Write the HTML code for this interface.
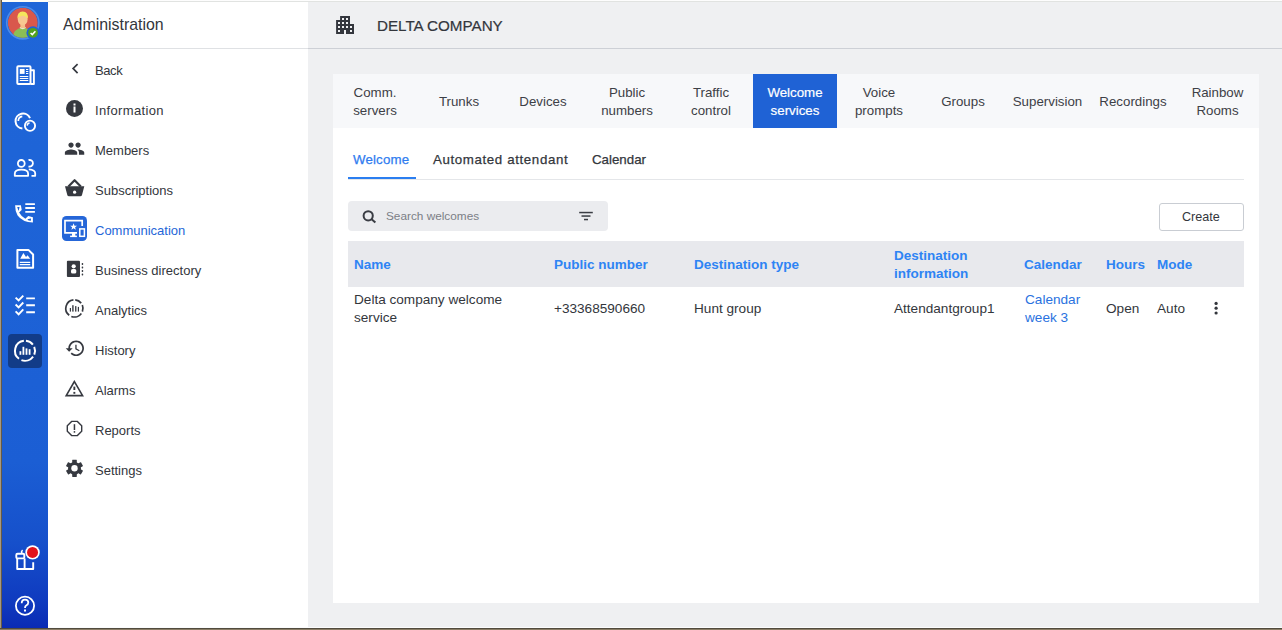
<!DOCTYPE html>
<html><head><meta charset="utf-8">
<style>
*{box-sizing:border-box;margin:0;padding:0}
html,body{width:1282px;height:630px;overflow:hidden;background:#fff}
body{position:relative;font-family:"Liberation Sans",sans-serif;color:#33363c}
.abs{position:absolute}
#topline{left:0;top:0;width:1282px;height:2px;background:linear-gradient(#fdfdfd 0 1px,#e1e3e1 1px 2px)}
#toprail{left:0;top:0;width:48px;height:2px;background:#fdfcf6}
#botwhite{left:48px;top:627px;width:1234px;height:1px;background:#fbfcfd}
#leftb{left:0;top:0;width:2px;height:630px;background:linear-gradient(90deg,#a59880 0 1px,#665a45 1px 2px)}
#botb{left:0;top:628px;width:1282px;height:2px;background:linear-gradient(#514b3e 0 1px,#8b7e66 1px 2px)}
#rail{left:2px;top:2px;width:46px;height:626px;background:linear-gradient(#1f66d8 0px,#1d62d6 300px,#1b5ed4 460px,#1650cb 540px,#0f3abf 600px,#0a2bb4 626px)}
#menu{left:48px;top:2px;width:260px;height:626px;background:#fff}
#menuhead{left:48px;top:48px;width:260px;height:1px;background:#dfe1e4}
#main{left:308px;top:2px;width:974px;height:626px;background:#eff0f2}
#mainhead{left:308px;top:48px;width:974px;height:1px;background:#cdd0d6}
.t{position:absolute;white-space:nowrap;line-height:1}
.mi{font-size:13px;color:#33363c}
#panel{left:333px;top:74px;width:926px;height:529px;background:#fff}
#tabbar{left:333px;top:74px;width:926px;height:54px;background:#f7f8fa;display:flex}
.tab{flex:none;width:84px;display:flex;align-items:center;justify-content:center;text-align:center;font-size:13.3px;line-height:18px;color:#3d4046;padding-top:1px}
.tab.act{background:#1f62d5;color:#fff;-webkit-text-stroke:0.2px #fff}
.st{font-size:13.3px;color:#33363c;-webkit-text-stroke:0.25px currentColor}
#subdiv{left:348px;top:179px;width:896px;height:1px;background:#e4e6e9}
#subul{left:348px;top:177px;width:68px;height:2px;background:#2b7ef0}
#search{left:348px;top:201px;width:260px;height:30px;background:#ebecef;border-radius:4px}
#create{left:1159px;top:203px;width:85px;height:28px;border:1px solid #c9cdd3;border-radius:3px;background:#fff}
#thead{left:348px;top:241px;width:896px;height:46px;background:#e8e9ed}
.th{font-size:13.5px;font-weight:700;color:#2e84f4;line-height:18px}
.td{font-size:13.6px;color:#33363c;line-height:18px}
#svg{position:absolute;left:0;top:0}
</style></head><body>
<div class="abs" id="topline"></div>
<div class="abs" id="toprail"></div>
<div class="abs" id="rail"></div>
<div class="abs" id="leftb"></div>
<div class="abs" id="botb"></div>
<div class="abs" id="menu"></div>
<div class="abs" id="menuhead"></div>
<div class="abs" id="main"></div>
<div class="abs" id="mainhead"></div>
<div class="abs" id="botwhite"></div>

<!-- menu -->
<div class="t" style="left:63px;top:17px;font-size:15.9px">Administration</div>
<div class="t mi" style="left:95px;top:64px;letter-spacing:-0.4px">Back</div>
<div class="t mi" style="left:95px;top:104px;letter-spacing:0.35px">Information</div>
<div class="t mi" style="left:95px;top:144px">Members</div>
<div class="t mi" style="left:95px;top:184px">Subscriptions</div>
<div class="t mi" style="left:95px;top:224px;color:#2566d8">Communication</div>
<div class="t mi" style="left:95px;top:264px">Business directory</div>
<div class="t mi" style="left:95px;top:304px">Analytics</div>
<div class="t mi" style="left:95px;top:344px">History</div>
<div class="t mi" style="left:95px;top:384px">Alarms</div>
<div class="t mi" style="left:95px;top:424px">Reports</div>
<div class="t mi" style="left:95px;top:464px">Settings</div>

<!-- header -->
<div class="t" style="left:377px;top:18px;font-size:15.2px;color:#33363c;-webkit-text-stroke:0.2px #33363c">DELTA COMPANY</div>

<div class="abs" id="panel"></div>
<div class="abs" id="tabbar">
  <div class="tab">Comm.<br>servers</div>
  <div class="tab">Trunks</div>
  <div class="tab">Devices</div>
  <div class="tab">Public<br>numbers</div>
  <div class="tab">Traffic<br>control</div>
  <div class="tab act">Welcome<br>services</div>
  <div class="tab">Voice<br>prompts</div>
  <div class="tab">Groups</div>
  <div class="tab" style="width:85px">Supervision</div>
  <div class="tab" style="width:86px">Recordings</div>
  <div class="tab" style="width:83px">Rainbow<br>Rooms</div>
</div>

<div class="t st" style="left:353px;top:153px;color:#2f7cf0;letter-spacing:0.15px">Welcome</div>
<div class="t st" style="left:433px;top:153px;letter-spacing:0.62px">Automated attendant</div>
<div class="t st" style="left:592px;top:153px">Calendar</div>
<div class="abs" id="subdiv"></div>
<div class="abs" id="subul"></div>

<div class="abs" id="search"></div>
<div class="t" style="left:386px;top:211px;font-size:11.8px;color:#7b7e86">Search welcomes</div>
<div class="abs" id="create"></div>
<div class="t" style="left:1182px;top:211px;font-size:12.6px;color:#33363c">Create</div>

<div class="abs" id="thead"></div>
<div class="t th" style="left:354px;top:256px">Name</div>
<div class="t th" style="left:554px;top:256px">Public number</div>
<div class="t th" style="left:694px;top:256px">Destination type</div>
<div class="t th" style="left:894px;top:247px">Destination<br>information</div>
<div class="t th" style="left:1024px;top:256px">Calendar</div>
<div class="t th" style="left:1106px;top:256px">Hours</div>
<div class="t th" style="left:1157px;top:256px">Mode</div>

<div class="t td" style="left:354px;top:291px">Delta company welcome<br>service</div>
<div class="t td" style="left:554px;top:300px">+33368590660</div>
<div class="t td" style="left:694px;top:300px">Hunt group</div>
<div class="t td" style="left:894px;top:300px">Attendantgroup1</div>
<div class="t td" style="left:1025px;top:291px;color:#2a72e0">Calendar<br>week 3</div>
<div class="t td" style="left:1106px;top:300px">Open</div>
<div class="t td" style="left:1157px;top:300px">Auto</div>

<svg id="svg" width="1282" height="630" viewBox="0 0 1282 630">
<!-- ===== rail icons ===== -->
<circle cx="22.8" cy="22.8" r="16.1" fill="none" stroke="#4c8be7" stroke-width="1.6"/>
<clipPath id="avc"><circle cx="22.8" cy="22.8" r="15"/></clipPath>
<g clip-path="url(#avc)">
 <circle cx="22.8" cy="22.8" r="15" fill="#d9584c"/>
 <path d="M12.6 40 Q12.6 28.6 22.7 27.6 Q32.6 28.6 33 40 Z" fill="#8bbf55"/>
 <path d="M19.6 28.1 Q22.7 30.2 25.9 28.1 L25.4 27 L20 27 Z" fill="#e6ead6"/>
 <rect x="20.4" y="22.5" width="4.7" height="5.6" fill="#f4c08a"/>
 <ellipse cx="22.7" cy="19.6" rx="4.9" ry="5.4" fill="#f7c891"/>
 <path d="M17.4 19.5 Q16.9 11.6 22.7 11.6 Q28.5 11.6 28 19.5 Q27.4 16.2 22.7 15.8 Q18 16.2 17.4 19.5 Z" fill="#f5e65c"/>
</g>
<circle cx="33" cy="32.8" r="6.6" fill="#1f63d6"/>
<circle cx="33" cy="32.8" r="4.9" fill="#52a11e"/>
<path d="M30.6 33 L32.3 34.6 L35.4 31.2" fill="none" stroke="#fff" stroke-width="1.6"/>

<g fill="none" stroke="#fff" stroke-width="2" stroke-linejoin="round">
 <!-- newspaper -->
 <rect x="17.3" y="66.2" width="13.2" height="17.8" rx="1"/>
 <path d="M30.5 70.3 H33.9 V84 H30.5" stroke-width="1.9"/>
 <rect x="19.8" y="68.9" width="4.8" height="5" fill="#fff" stroke="none"/>
 <path d="M26 69.5 H28.3 M26 71.5 H28.3 M26 73.5 H28.3 M19.8 76.5 H28.3 M19.8 78.5 H28.3 M19.8 80.5 H28.3" stroke-width="1"/>
 <!-- bubbles -->
 <path d="M22.4 128.5 A7.5 7.5 0 1 1 30 118.2" stroke-width="2"/>
 <circle cx="30" cy="125.75" r="5.1" stroke-width="1.9"/>
 <path d="M18.3 121 A4.7 4.7 0 0 1 22.3 116.3" stroke-width="1.7"/>
 <path d="M27.2 125.6 A2.8 2.8 0 0 1 29.6 123" stroke-width="1.5"/>
 <!-- contacts -->
 <circle cx="21.3" cy="163.4" r="3.4" stroke-width="1.8"/>
 <path d="M14.8 175.8 V173.5 Q14.8 169.6 21.4 169.6 Q28.1 169.6 28.1 173.5 V175.8 Z" stroke-width="1.8"/>
 <path d="M28.5 160.2 A3.3 3.3 0 1 1 28.5 166.4" stroke-width="1.8"/>
 <path d="M28.8 169.3 Q35.2 169.8 35.2 173.2 V175.8 H31.5" stroke-width="1.8"/>
 <!-- phone list -->
 <path d="M25.3 204.1 H34.9 M25.3 208 H34.9 M25.3 211.9 H34.9" stroke-width="1.8" stroke-linejoin="miter"/>
 <path d="M15.1 205.2 L20.9 205.2 L21.7 209.9 L19.1 212.4 Q21.4 216.5 25.4 218.8 L28.2 216.1 L32.9 217.3 L32.9 222.6 Q22.5 222.3 17.6 215.6 Q15.1 211.5 15.1 205.2 Z M17.2 207 L19.6 207 L18.6 210.9 Z M27.3 219.2 L31 218.5 L30.9 220.8 L28.6 220.6 Z" fill="#fff" fill-rule="evenodd" stroke="none"/>
 <!-- doc image -->
 <path d="M17.4 249.9 H28.4 L33.1 254.5 V267.7 H17.4 Z" stroke-width="2"/>
 <path d="M20.2 258.8 L23.4 252.9 L26 257 L27.6 255.2 L30.2 258.8 Z" fill="#fff" stroke="none"/>
 <path d="M19.8 262.4 H30.2 M19.8 264.6 H30.2" stroke-width="1.2"/>
 <!-- checklist -->
 <path d="M15.6 297.6 L18.6 300.5 L23.3 295.6 M15.6 304.5 L18.6 307.4 L23.3 302.5 M15.6 311.4 L18.6 314.3 L23.3 309.4" stroke-width="1.9" stroke-linejoin="miter"/>
 <path d="M26.2 298.4 H34.9 M26.2 305.3 H34.9 M26.2 312.3 H34.9" stroke-width="1.9"/>
</g>
<!-- analytics active -->
<rect x="8" y="334" width="34" height="34" rx="4" fill="#123c88"/>
<g fill="none" stroke="#fff" stroke-width="2">
 <path d="M25.96 340.85 A10 10 0 0 1 32.88 344.64 M34.21 346.89 A10 10 0 0 1 34.27 354.55 M33.09 356.68 A10 10 0 0 1 21.42 360.14 M18.98 358.79 A10 10 0 0 1 23.87 340.86"/>
</g>
<g fill="#fff">
 <rect x="19.5" y="351.2" width="1.8" height="3.6"/>
 <rect x="22.5" y="346.8" width="1.8" height="8"/>
 <rect x="25.6" y="348.4" width="1.8" height="6.4"/>
 <rect x="28.7" y="349.2" width="1.8" height="5.6"/>
</g>
<!-- gift -->
<g fill="none" stroke="#fff" stroke-width="1.9" stroke-linejoin="round">
 <path d="M17.2 558.4 V569 H33.2 V562.2"/>
 <path d="M24.6 558.4 V569"/>
 <rect x="16.3" y="553.8" width="8" height="4.6" rx="1.2"/>
 <path d="M21.8 553.4 Q20.9 551.6 22.6 550.2" stroke-width="1.6"/>
</g>
<circle cx="32.55" cy="552.4" r="7.2" fill="#fff"/>
<circle cx="32.55" cy="552.4" r="5.5" fill="#e3131b"/>
<!-- help -->
<circle cx="25" cy="605.8" r="9.1" fill="none" stroke="#fff" stroke-width="1.8"/>
<path d="M21.7 603.2 Q21.8 599.6 25 599.6 Q28.3 599.6 28.3 602.6 Q28.3 604.5 26.2 605.5 Q25 606.2 25 608" fill="none" stroke="#fff" stroke-width="1.8"/>
<rect x="24" y="609.5" width="2" height="2" fill="#fff"/>

<!-- ===== menu icons ===== -->
<g fill="#363940">
 <!-- chevron -->
 <path transform="translate(65.1 58.4) scale(0.85)" d="M15.41 7.41L14 6l-6 6 6 6 1.41-1.41L10.83 12z"/>
 <!-- info -->
 <circle cx="74.5" cy="108.4" r="8.5"/>
 <!-- people -->
 <path transform="translate(64,138) scale(0.88)" d="M16 11c1.66 0 2.99-1.34 2.99-3S17.66 5 16 5c-1.66 0-3 1.34-3 3s1.34 3 3 3zm-8 0c1.66 0 2.99-1.34 2.99-3S9.66 5 8 5C6.34 5 5 6.34 5 8s1.34 3 3 3zm0 2c-2.33 0-7 1.17-7 3.5V19h14v-2.5c0-2.330-4.67-3.5-7-3.5zm8 0c-.29 0-.62.02-.97.05 1.16.84 1.97 1.97 1.97 3.45V19h6v-2.5c0-2.33-4.67-3.5-7-3.5z"/>
 <!-- basket -->
 <path d="M65 186.3 H84.3 L82 195 Q81.7 196.3 80.3 196.3 H69 Q67.6 196.3 67.3 195 Z"/>
 <path d="M68.4 186.6 L74.6 180.2 L80.8 186.6" fill="none" stroke="#363940" stroke-width="2.2" stroke-linejoin="round"/>
 <!-- business directory -->
 <rect x="66.9" y="260.7" width="13.1" height="16.2" rx="1"/>
 <rect x="81.7" y="262.9" width="1.5" height="2" rx=".6"/>
 <rect x="81.7" y="266.4" width="1.5" height="2" rx=".6"/>
 <rect x="81.7" y="269.9" width="1.5" height="2" rx=".6"/>
 <rect x="81.7" y="273.4" width="1.5" height="2" rx=".6"/>
 <!-- analytics bars -->
 <rect x="69.8" y="308" width="1.2" height="3.6"/>
 <rect x="72.2" y="305.2" width="1.4" height="6.4"/>
 <rect x="75.1" y="306.1" width="1.3" height="5.5"/>
 <rect x="77.8" y="306.9" width="1.2" height="4.7"/>
 <!-- history -->
 <path transform="translate(64.85,337.85) scale(0.87)" d="M13 3c-4.97 0-9 4.03-9 9H1l3.890 3.890.07.14L9 12H6c0-3.87 3.13-7 7-7s7 3.13 7 7-3.13 7-7 7c-1.93 0-3.68-.79-4.94-2.06l-1.42 1.42C8.27 19.99 10.51 21 13 21c4.97 0 9-4.03 9-9s-4.03-9-9-9zm-1 5v5l4.28 2.54.72-1.21-3.5-2.08V8H12z"/>
 <!-- alarm dots -->
 <rect x="73.4" y="386.6" width="1.9" height="3.4"/>
 <rect x="73.4" y="391.9" width="1.9" height="1.9"/>
 <!-- reports ! -->
 <rect x="73.7" y="424.2" width="1.5" height="5.8"/>
 <rect x="73.7" y="431.1" width="1.5" height="1.6"/>
 <!-- gear -->
 <g transform="translate(74.5 468.3)">
  <circle r="6.4"/>
  <rect x="-2.3" y="-8.6" width="4.6" height="4.5" rx=".4"/>
  <rect x="-2.3" y="-8.6" width="4.6" height="4.5" rx=".4" transform="rotate(60)"/>
  <rect x="-2.3" y="-8.6" width="4.6" height="4.5" rx=".4" transform="rotate(120)"/>
  <rect x="-2.3" y="-8.6" width="4.6" height="4.5" rx=".4" transform="rotate(180)"/>
  <rect x="-2.3" y="-8.6" width="4.6" height="4.5" rx=".4" transform="rotate(240)"/>
  <rect x="-2.3" y="-8.6" width="4.6" height="4.5" rx=".4" transform="rotate(300)"/>
  <circle r="3.2" fill="#fff"/>
 </g>
</g>
<g fill="#fff">
 <rect x="73.5" y="106.5" width="2" height="6"/>
 <rect x="73.5" y="103.5" width="2" height="2"/>
 <circle cx="74.6" cy="192.2" r="1.6"/>
 <circle cx="73.7" cy="266.3" r="2.1"/>
 <rect x="71" y="269.1" width="5.3" height="4.5" rx="1.6"/>
</g>
<g fill="none" stroke="#363940">
 <path d="M75.22 299.84 A8.6 8.6 0 0 1 81.18 303.11 M82.32 305.04 A8.6 8.6 0 0 1 82.37 311.62 M81.36 313.45 A8.6 8.6 0 0 1 71.32 316.43 M69.22 315.27 A8.6 8.6 0 0 1 73.43 299.86" stroke-width="1.7"/>
 <path d="M74.4 381.5 L66.2 395.6 H82.6 Z" stroke-width="1.6" stroke-linejoin="miter"/>
 <path d="M71.6 421.4 H77.4 L81.7 425.7 V431.3 L77.4 435.6 H71.6 L67.3 431.3 V425.7 Z" stroke-width="1.4"/>
</g>
<!-- communication -->
<rect x="62" y="216" width="25" height="25" rx="4.5" fill="#2566d8"/>
<g fill="none" stroke="#fff" stroke-width="1.7">
 <path d="M82.2 225.9 V220.6 H65 V232.8 H77"/>
 <rect x="79.8" y="228.9" width="4.6" height="7.4" stroke-width="1.5"/>
</g>
<g fill="#fff">
 <rect x="72" y="233" width="3.3" height="3.2"/>
 <rect x="70.1" y="235.6" width="6.8" height="1.5"/>
 <path transform="translate(73.6 226.8) scale(1.15) translate(-73.6 -226.8)" d="M73.6 223.7 L74.4 225.8 L76.6 225.8 L74.9 227.1 L75.5 229.3 L73.6 228 L71.7 229.3 L72.3 227.1 L70.6 225.8 L72.8 225.8 Z"/>
</g>

<!-- ===== header building ===== -->
<g fill="#33363d">
 <path d="M340.1 16.1 H350 V24 H354 V33.9 H346 V30 H344 V33.9 H336.1 V20 H340.1 Z"/>
</g>
<g fill="#eff0f2">
 <rect x="342" y="18" width="2" height="2"/><rect x="346" y="18" width="2" height="2"/>
 <rect x="338" y="22" width="2" height="2"/><rect x="342" y="22" width="2" height="2"/><rect x="346" y="22" width="2" height="2"/>
 <rect x="338" y="26" width="2" height="2"/><rect x="342" y="26" width="2" height="2"/><rect x="346" y="26" width="2" height="2"/><rect x="350" y="26" width="2" height="2"/>
 <rect x="338" y="30" width="2" height="2"/><rect x="350" y="30" width="2" height="2"/>
</g>

<!-- search icon -->
<g fill="none" stroke="#3a3d44" stroke-width="2">
 <circle cx="368.2" cy="215.8" r="4.6"/>
 <path d="M371.6 219.2 L375.4 222.6"/>
</g>
<!-- filter -->
<g fill="#3a3d44">
 <rect x="579.2" y="211.8" width="13.6" height="1.5"/>
 <rect x="581.5" y="215.3" width="9" height="1.5"/>
 <rect x="584" y="218.8" width="4" height="1.5"/>
</g>
<!-- kebab -->
<g fill="#33363c">
 <circle cx="1216.1" cy="303.4" r="1.6"/>
 <circle cx="1216.1" cy="308.2" r="1.6"/>
 <circle cx="1216.1" cy="313" r="1.6"/>
</g>
</svg>
</body></html>
